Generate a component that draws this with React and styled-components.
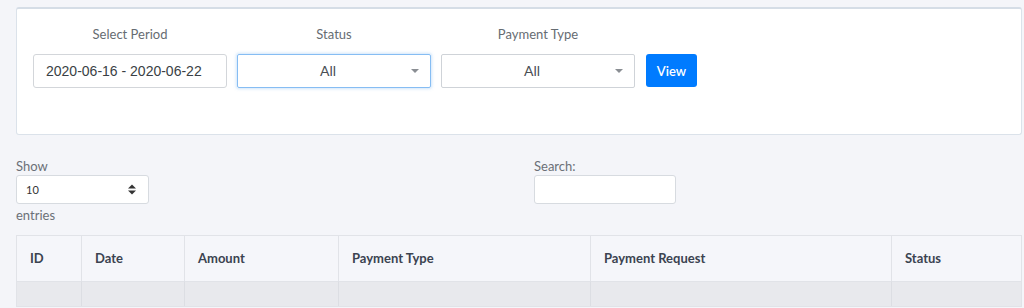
import styled, { createGlobalStyle } from "styled-components";

const Global = createGlobalStyle`
    body {
        margin: 0;
        background: #f4f5f9;
        font-family: Lato, "Open Sans", sans-serif;
    }
`

const Page = styled.div`
    padding: 7px 2px 0 16px;
`

const Card = styled.div`
    background: #fff;
    border: 1px solid #dbe2ea;
    border-top: 2px solid #d5dde6;
    border-radius: 3px;
    height: 128px;
    padding: 15px 16px 0;
    box-sizing: border-box;
    display: flex;
    align-items: flex-start;
    gap: 10px;
`

const Field = styled.div`
    width: 194px;
    display: flex;
    flex-direction: column;
`

const Label = styled.div`
    text-align: center;
    color: #666c72;
    font-size: 13px;
    height: 20px;
    line-height: 20px;
    margin-bottom: 10px;
`

const DateInput = styled.div`
    height: 34px;
    box-sizing: border-box;
    border: 1px solid #d3d6da;
    border-radius: 3px;
    padding-left: 12px;
    font-family: "Liberation Sans", Arial, sans-serif;
    font-size: 14px;
    color: #3a3f45;
    line-height: 32px;
    white-space: nowrap;
`

const Select = styled.div`
    position: relative;
    height: 34px;
    box-sizing: border-box;
    border: 1px solid ${p => (p.$focus ? "#86bdf3" : "#cfd3d8")};
    box-shadow: ${p => (p.$focus ? "0 0 3px 1px rgba(120, 180, 240, 0.35)" : "none")};
    border-radius: 2px;
    text-align: center;
    padding-right: 12px;
    font-size: 14px;
    color: #4a4f55;
    line-height: 32px;

    &::after {
        content: "";
        position: absolute;
        right: 11px;
        top: 14px;
        border-left: 4px solid transparent;
        border-right: 4px solid transparent;
        border-top: 4px solid #8a8e93;
    }
`

const ViewButton = styled.button`
    margin-top: 30px;
    margin-left: 1px;
    width: 51px;
    height: 33px;
    border: none;
    border-radius: 3px;
    background: #007bff;
    color: #fff;
    font-family: Lato, sans-serif;
    font-size: 13px;
    font-weight: 600;
`

const Controls = styled.div`
    display: grid;
    grid-template-columns: 518px 1fr;
    margin-top: 22px;
    height: 78px;
`

const Small = styled.div`
    font-size: 13px;
    color: #6b7077;
    line-height: 18px;
`

const LengthSelect = styled.div`
    display: flex;
    align-items: center;
    justify-content: space-between;
    width: 133px;
    height: 29px;
    box-sizing: border-box;
    background: #fff;
    border: 1px solid #d7dbe0;
    border-radius: 3px;
    padding: 0 12px 0 9px;
    font-size: 11px;
    color: #333;
    margin: 0 0 2px;
`

const SearchBox = styled.div`
    width: 142px;
    height: 29px;
    box-sizing: border-box;
    background: #fff;
    border: 1px solid #d7dbe0;
    border-radius: 3px;
`

const Table = styled.div`
    display: grid;
    grid-template-columns: 64px 103px 154px 252px 301px 1fr;
    border: 1px solid #e1e3e8;
`

const Th = styled.div`
    height: 45px;
    line-height: 45px;
    padding-left: 13px;
    background: #f5f6fa;
    border-left: ${p => (p.$first ? "none" : "1px solid #e1e3e8")};
    font-size: 13px;
    font-weight: 700;
    color: #3b4350;
`

const Td = styled.div`
    height: 24px;
    background: #e8e9ed;
    border-top: 1px solid #e1e3e8;
    border-left: ${p => (p.$first ? "none" : "1px solid #dcdee3")};
`

const Caret = () => (
    <svg width="8" height="11" viewBox="0 0 8 11">
        <path d="M0 4.5 L4 0.5 L8 4.5 Z M0 6.5 L8 6.5 L4 10.5 Z" fill="#333" />
    </svg>
)

const columns = ["ID", "Date", "Amount", "Payment Type", "Payment Request", "Status"];

function App() {
    return (
        <Page>
            <Global />
            <Card>
                <Field>
                    <Label>Select Period</Label>
                    <DateInput>2020-06-16 - 2020-06-22</DateInput>
                </Field>
                <Field>
                    <Label>Status</Label>
                    <Select $focus>All</Select>
                </Field>
                <Field>
                    <Label>Payment Type</Label>
                    <Select>All</Select>
                </Field>
                <ViewButton>View</ViewButton>
            </Card>
            <Controls>
                <div>
                    <Small>Show</Small>
                    <LengthSelect>10<Caret /></LengthSelect>
                    <Small>entries</Small>
                </div>
                <div>
                    <Small>Search:</Small>
                    <SearchBox />
                </div>
            </Controls>
            <Table>
                {columns.map((c, i) => <Th key={c} $first={i === 0}>{c}</Th>)}
                {columns.map((c, i) => <Td key={c} $first={i === 0} />)}
            </Table>
        </Page>
    )
}

export default App;
